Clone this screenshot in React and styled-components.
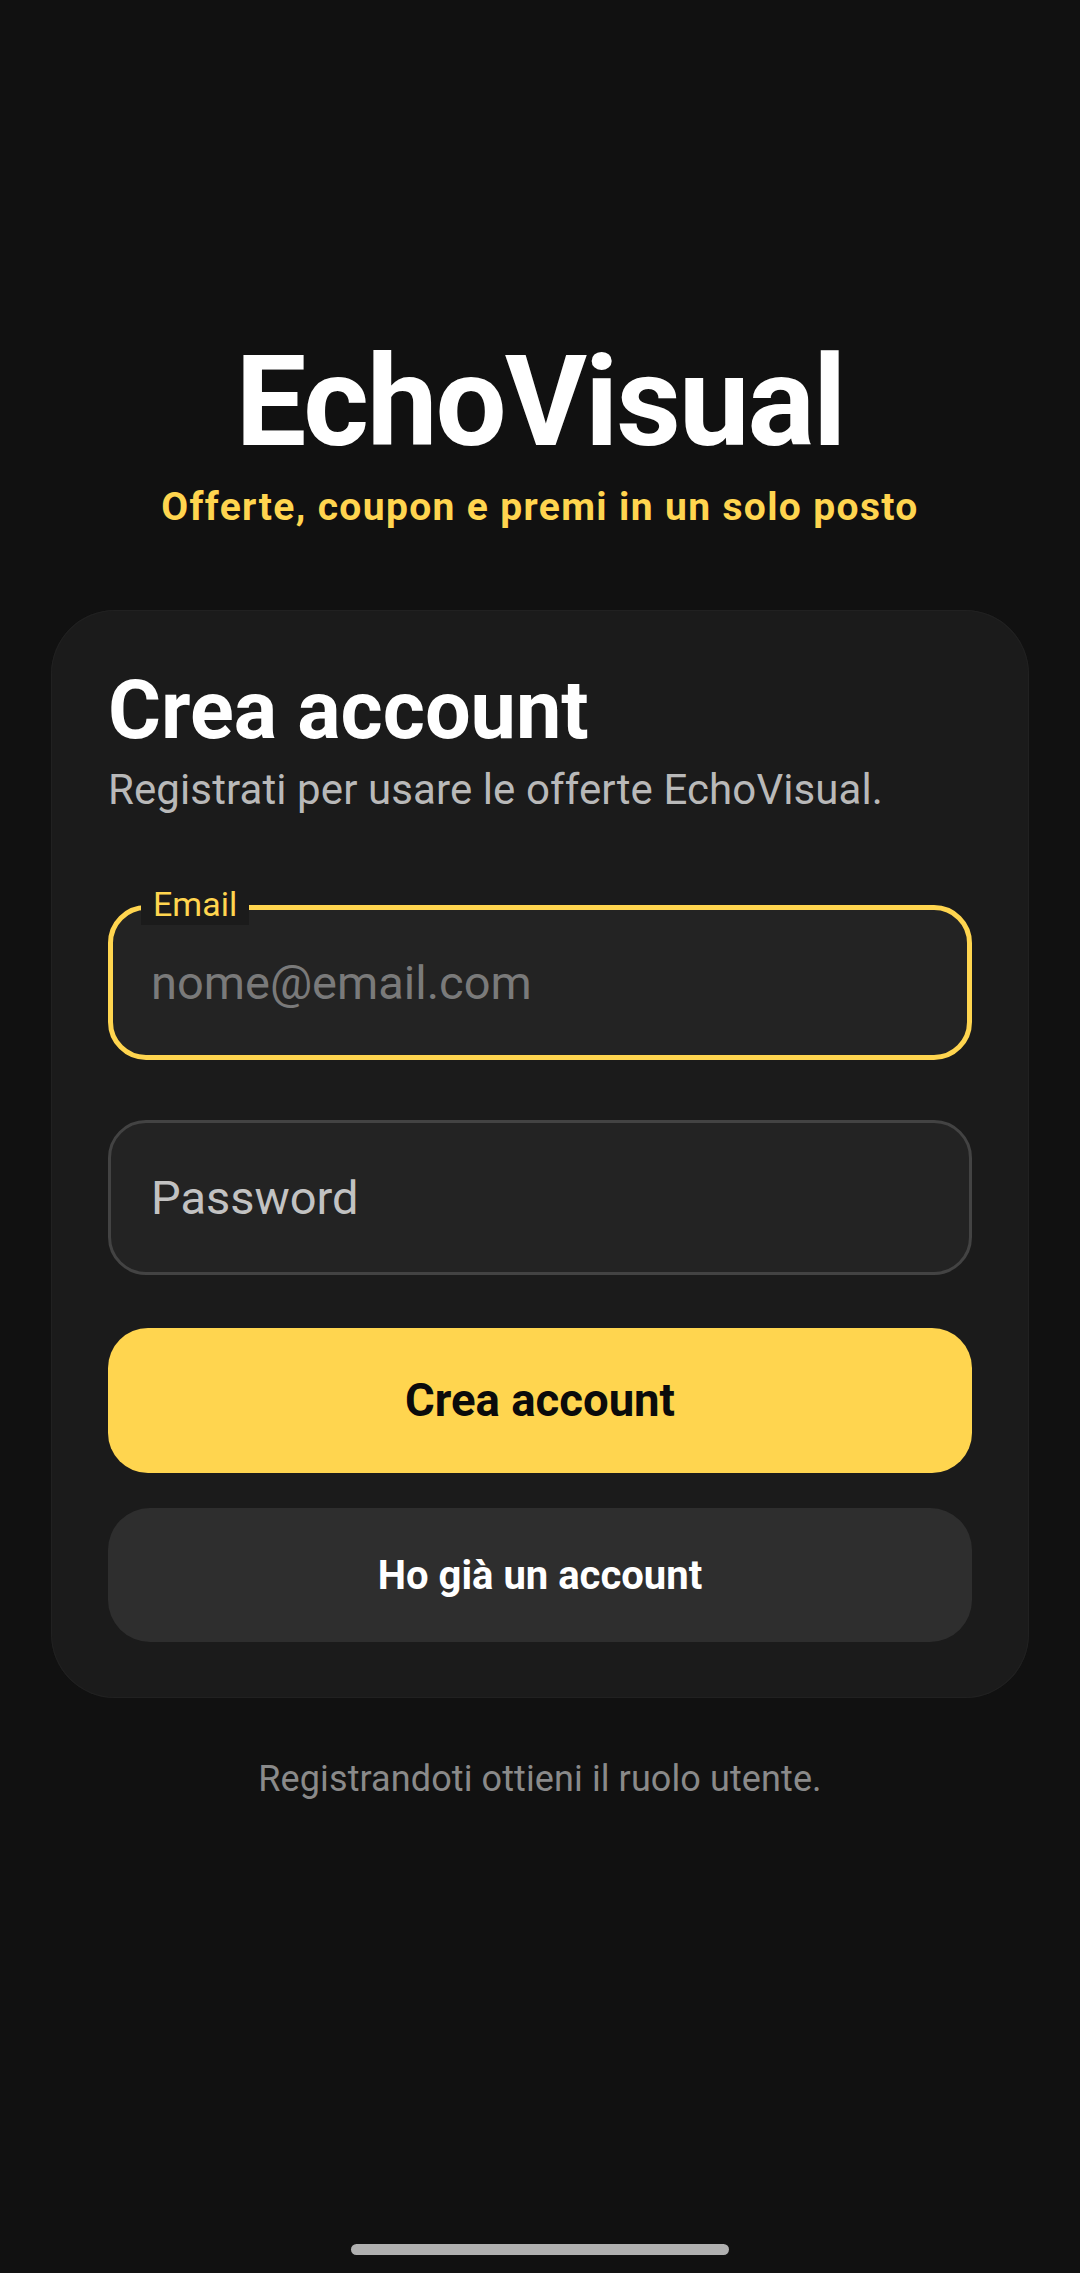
import React, { useState } from 'react';
import styled, { createGlobalStyle } from 'styled-components';

const GlobalStyle = createGlobalStyle`
  html, body {
    margin: 0;
    padding: 0;
    background: #111111;
  }
  * {
    box-sizing: border-box;
  }
`;

const YELLOW = '#FFD54F';

const Page = styled.div`
  min-height: 2273px;
  display: flex;
  flex-direction: column;
  align-items: center;
  padding-top: 339px;
  background: #111111;
  font-family: Roboto, 'Noto Sans', sans-serif;
`;

const Title = styled.h1`
  margin: 0;
  font-size: 126px;
  line-height: 1;
  font-weight: 700;
  color: #ffffff;
  letter-spacing: -2px;
`;

const Tagline = styled.p`
  margin: 23px 0 0;
  font-size: 39px;
  line-height: 1;
  font-weight: 700;
  color: ${YELLOW};
  letter-spacing: 1.35px;
`;

const Card = styled.section`
  align-self: stretch;
  margin: 83px 51px 0;
  padding: 60px 57px 56px;
  background: #1b1b1b;
  border-radius: 64px;
  box-shadow: inset 0 0 0 1px #212121;
`;

const Heading = styled.h2`
  margin: 0;
  font-size: 81px;
  line-height: 1;
  font-weight: 700;
  color: #ffffff;
`;

const Lead = styled.p`
  margin: 18px 0 0;
  font-size: 42px;
  line-height: 1;
  color: #b9b9b9;
  letter-spacing: 0.1px;
`;

const Form = styled.form`
  display: flex;
  flex-direction: column;
  margin-top: 94px;
`;

const Field = styled.div`
  position: relative;
  margin-top: ${(p) => p.$gap || 0}px;
`;

const FloatingLabel = styled.label`
  position: absolute;
  top: -22px;
  left: 33px;
  padding: 0 12px;
  height: 42px;
  line-height: 42px;
  font-size: 34px;
  color: ${YELLOW};
  background: #1b1b1b;
`;

const Input = styled.input`
  display: block;
  width: 100%;
  height: 155px;
  margin: 0;
  padding: 0 30px 0 ${(p) => 43 - (p.$focused ? 5 : 3)}px;
  border: ${(p) => (p.$focused ? `5px solid ${YELLOW}` : '3px solid #434343')};
  border-radius: 38px;
  background: #232323;
  color: #e6e6e6;
  font-family: Roboto, 'Noto Sans', sans-serif;
  font-size: 47px;
  outline: none;

  &::placeholder {
    color: ${(p) => (p.$focused ? '#7a7a7a' : '#c2c2c2')};
    opacity: 1;
  }
`;

const Button = styled.button`
  display: flex;
  align-items: center;
  justify-content: center;
  width: 100%;
  height: ${(p) => (p.$primary ? 145 : 134)}px;
  margin-top: ${(p) => (p.$primary ? 53 : 35)}px;
  border: none;
  border-radius: ${(p) => (p.$primary ? 40 : 42)}px;
  background: ${(p) => (p.$primary ? YELLOW : '#2e2e2e')};
  color: ${(p) => (p.$primary ? '#0b0b0b' : '#ffffff')};
  font-family: Roboto, 'Noto Sans', sans-serif;
  font-size: ${(p) => (p.$primary ? 45.5 : 40)}px;
  font-weight: 700;
  cursor: pointer;
`;

const Note = styled.p`
  margin: 63px 0 0;
  font-size: 36px;
  line-height: 1;
  color: #8a8a8a;
  letter-spacing: 0.1px;
`;

const HomeBar = styled.div`
  margin-top: auto;
  margin-bottom: 18px;
  width: 378px;
  height: 11px;
  border-radius: 6px;
  background: #b0b0b0;
`;

export default function App() {
  const [email, setEmail] = useState('');
  const [password, setPassword] = useState('');

  const handleSubmit = (e) => {
    e.preventDefault();
  };

  return (
    <>
      <GlobalStyle />
      <Page>
        <Title>EchoVisual</Title>
        <Tagline>Offerte, coupon e premi in un solo posto</Tagline>

        <Card>
          <Heading>Crea account</Heading>
          <Lead>Registrati per usare le offerte EchoVisual.</Lead>

          <Form onSubmit={handleSubmit} noValidate>
            <Field>
              <FloatingLabel htmlFor="email">Email</FloatingLabel>
              <Input
                id="email"
                type="email"
                $focused
                placeholder="nome@email.com"
                value={email}
                onChange={(e) => setEmail(e.target.value)}
              />
            </Field>
            <Field $gap={60}>
              <Input
                id="password"
                type="password"
                placeholder="Password"
                value={password}
                onChange={(e) => setPassword(e.target.value)}
              />
            </Field>
            <Button type="submit" $primary>
              Crea account
            </Button>
            <Button type="button">Ho già un account</Button>
          </Form>
        </Card>

        <Note>Registrandoti ottieni il ruolo utente.</Note>
        <HomeBar />
      </Page>
    </>
  );
}
